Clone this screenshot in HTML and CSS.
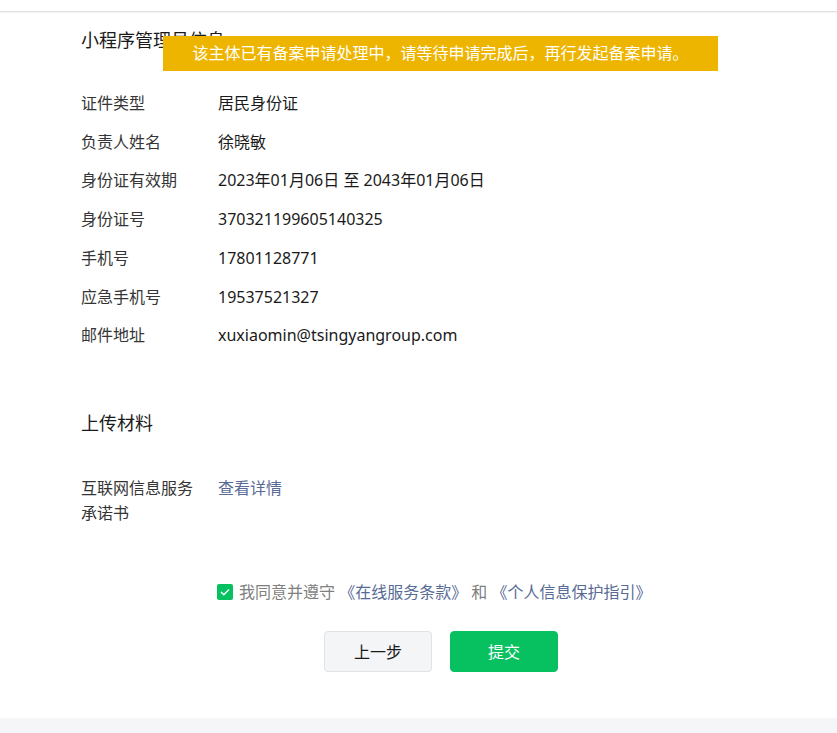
FILE: index.html
```html
<!DOCTYPE html>
<html lang="zh-CN">
<head>
    <meta charset="UTF-8">
    <title>小程序备案</title>
    <link rel="stylesheet" href="styles.css">
</head>
<body>
    <div class="topbar"></div>

    <div class="main">
        <!-- 管理员信息 -->
        <h2 class="section-title">小程序管理员信息</h2>
        <div class="info-list">
            <div class="info-row"><span class="label">证件类型</span><span class="value">居民身份证</span></div>
            <div class="info-row"><span class="label">负责人姓名</span><span class="value">徐晓敏</span></div>
            <div class="info-row"><span class="label">身份证有效期</span><span class="value">2023年01月06日 至 2043年01月06日</span></div>
            <div class="info-row"><span class="label">身份证号</span><span class="value">370321199605140325</span></div>
            <div class="info-row"><span class="label">手机号</span><span class="value">17801128771</span></div>
            <div class="info-row"><span class="label">应急手机号</span><span class="value">19537521327</span></div>
            <div class="info-row"><span class="label">邮件地址</span><span class="value">xuxiaomin@tsingyangroup.com</span></div>
        </div>

        <!-- 上传材料 -->
        <h2 class="section-title upload-title">上传材料</h2>
        <div class="info-row upload-row">
            <span class="label">互联网信息服务承诺书</span>
            <a href="#" class="link">查看详情</a>
        </div>

        <div class="agree">
            <span class="checkbox">
                <svg width="10" height="8" viewBox="0 0 10 8"><path d="M1 4l2.8 2.8L9 1.5" fill="none" stroke="#fff" stroke-width="1.4"/></svg>
            </span>
            <span class="agree-text">我同意并遵守 <a href="#" class="link">《在线服务条款》</a> 和 <a href="#" class="link">《个人信息保护指引》</a></span>
        </div>

        <div class="actions">
            <button class="btn btn-default">上一步</button>
            <button class="btn btn-primary">提交</button>
        </div>
    </div>

    <div class="footer"></div>

    <div class="toast">该主体已有备案申请处理中，请等待申请完成后，再行发起备案申请。</div>
</body>
</html>
```

FILE: styles.css
```css
body {
    margin: 0;
    font-family: "Noto Sans", "Noto Sans CJK SC", sans-serif;
    color: #1a1a1a;
    background: #fff;
}

.topbar {
    height: 11px;
    border-bottom: 1px solid #e2e2e2;
    box-shadow: 0 1px 1px rgba(0, 0, 0, 0.04);
}

.main {
    padding: 16px 0 0 81px;
    height: 706px;
    box-sizing: border-box;
}

.section-title {
    margin: 0;
    font-size: 18px;
    font-weight: normal;
    line-height: 24px;
}

.info-list {
    margin-top: 32px;
}

.info-row {
    display: flex;
    font-size: 16px;
    line-height: 22.7px;
    padding: 8px 0;
}

.label {
    width: 116px;
    margin-right: 21px;
    flex-shrink: 0;
    color: #353535;
}

.upload-title {
    margin-top: 56px;
}

.upload-row {
    margin-top: 33px;
    line-height: 25px;
}

.link {
    color: #576b95;
    text-decoration: none;
}

.agree {
    display: flex;
    align-items: center;
    margin: 47px 0 0 136px;
    font-size: 16px;
    line-height: 22px;
    color: #7f7f7f;
}

.agree-text {
    white-space: nowrap;
}

.checkbox {
    width: 16px;
    height: 16px;
    border-radius: 2px;
    background: #07c160;
    display: flex;
    align-items: center;
    justify-content: center;
    margin-right: 6px;
}

.actions {
    display: flex;
    gap: 18px;
    margin: 28px 0 0 243px;
}

.btn {
    width: 108px;
    height: 41px;
    border-radius: 4px;
    font-family: inherit;
    font-size: 16px;
    cursor: pointer;
}

.btn-default {
    background: #f4f5f7;
    border: 1px solid #e1e2e5;
    color: #1a1a1a;
}

.btn-primary {
    background: #07c160;
    border: 1px solid #07c160;
    color: #fff;
}

.footer {
    height: 40px;
    background: #f5f6f8;
}

/* 提示条 */
.toast {
    position: absolute;
    left: 163px;
    top: 36px;
    width: 555px;
    height: 35px;
    line-height: 35px;
    background: #eeb500;
    color: #fff;
    font-size: 16px;
    text-align: center;
}
```
